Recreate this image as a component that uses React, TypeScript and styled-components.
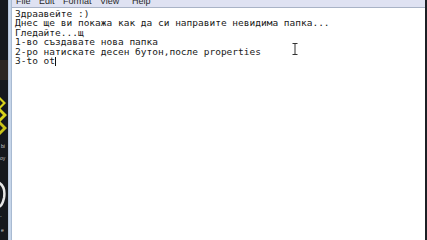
import React from "react";
import styled, { createGlobalStyle } from "styled-components";

const Global = createGlobalStyle`
  html, body { margin: 0; padding: 0; background: #ffffff; }
  body { width: 427px; height: 240px; overflow: hidden; }
`;

const Screen = styled.div`
  display: flex;
  width: 427px;
  height: 240px;
  overflow: hidden;
  background: #ffffff;
`;

const Desktop = styled.div`
  width: 8px;
  flex: none;
  background: #15181d;
  overflow: hidden;
`;

const Frame = styled.div`
  width: 4px;
  flex: none;
  background: linear-gradient(90deg, #aebfd6 0%, #cbd9ec 40%, #c2d2e7 75%, #8fa3bd 100%);
`;

const RightEdge = styled.div`
  width: 2px;
  flex: none;
  background: #1c1f24;
`;

const Main = styled.div`
  flex: 1;
  display: flex;
  flex-direction: column;
  min-width: 0;
`;

const MenuBar = styled.div`
  height: 7px;
  flex: none;
  display: flex;
  align-items: flex-end;
  padding-left: 4px;
  background: #dfe2f2;
  border-bottom: 1px solid #a9b3c6;
  overflow: hidden;
`;

const MenuItem = styled.span<{ $w: number }>`
  width: ${(p) => p.$w}px;
  flex: none;
  font-family: "Liberation Sans", Arial, sans-serif;
  font-size: 9px;
  line-height: 11px;
  color: #2a2a2a;
`;

const Editor = styled.div`
  flex: 1;
  padding: 1px 0 0 3px;
  font-family: "DejaVu Sans Mono", "Liberation Mono", monospace;
  font-size: 9.5px;
  line-height: 9.4px;
  color: #1a1a1a;
  white-space: pre;
  position: relative;
`;

const Line = styled.div``;

const Caret = styled.span`
  display: inline-block;
  width: 1px;
  height: 9px;
  background: #111;
  vertical-align: -2px;
`;

const IBeam = styled.svg`
  position: absolute;
  left: 280px;
  top: 35px;
`;

export default function App() {
  return (
    <Screen>
      <Global />
      <Desktop>
        <svg width="8" height="240" viewBox="0 0 8 240">
          <rect x="0" y="0" width="8" height="240" fill="#15181d" />
          <rect x="0" y="60" width="8" height="20" fill="#3a3026" opacity="0.6" />
          <path d="M0 97 L6 103 L0 109 L0 106 L3 103 L0 100 Z" fill="#d8d21a" />
          <path d="M0 108 L7 115 L0 122 L0 118 L3 115 L0 112 Z" fill="#d8d21a" />
          <path d="M0 121 L7 128 L0 135 L0 131 L3 128 L0 125 Z" fill="#c9c318" />
          <text x="1" y="148" fontSize="5" fill="#cfcfcf" fontFamily="Liberation Sans">bi</text>
          <text x="0" y="160" fontSize="5" fill="#bdbdbd" fontFamily="Liberation Sans">oy</text>
          <path d="M-2 182 Q6 186 4 198 Q2 207 -2 207" stroke="#e6e6e6" strokeWidth="2.5" fill="none" />
          <text x="0" y="218" fontSize="5" fill="#bdbdbd" fontFamily="Liberation Sans">-</text>
          <text x="1" y="232" fontSize="5" fill="#cfcfcf" fontFamily="Liberation Sans">e</text>
        </svg>
      </Desktop>
      <Frame />
      <Main>
        <MenuBar>
          <MenuItem $w={23}>File</MenuItem>
          <MenuItem $w={24}>Edit</MenuItem>
          <MenuItem $w={37}>Format</MenuItem>
          <MenuItem $w={32}>View</MenuItem>
          <MenuItem $w={30}>Help</MenuItem>
        </MenuBar>
        <Editor>
          <Line>Здраавейте :)</Line>
          <Line>Днес ще ви покажа как да си направите невидима папка...</Line>
          <Line>Гледайте...щ</Line>
          <Line>1-во създавате нова папка</Line>
          <Line>2-ро натискате десен бутон,после properties</Line>
          <Line>
            3-to ot<Caret />
          </Line>
          <IBeam width="6" height="12" viewBox="0 0 6 12">
            <path d="M0.5 0.5 H5.5 M3 0.5 V11.5 M0.5 11.5 H5.5" stroke="#333" strokeWidth="1" fill="none" />
          </IBeam>
        </Editor>
      </Main>
      <RightEdge />
    </Screen>
  );
}
